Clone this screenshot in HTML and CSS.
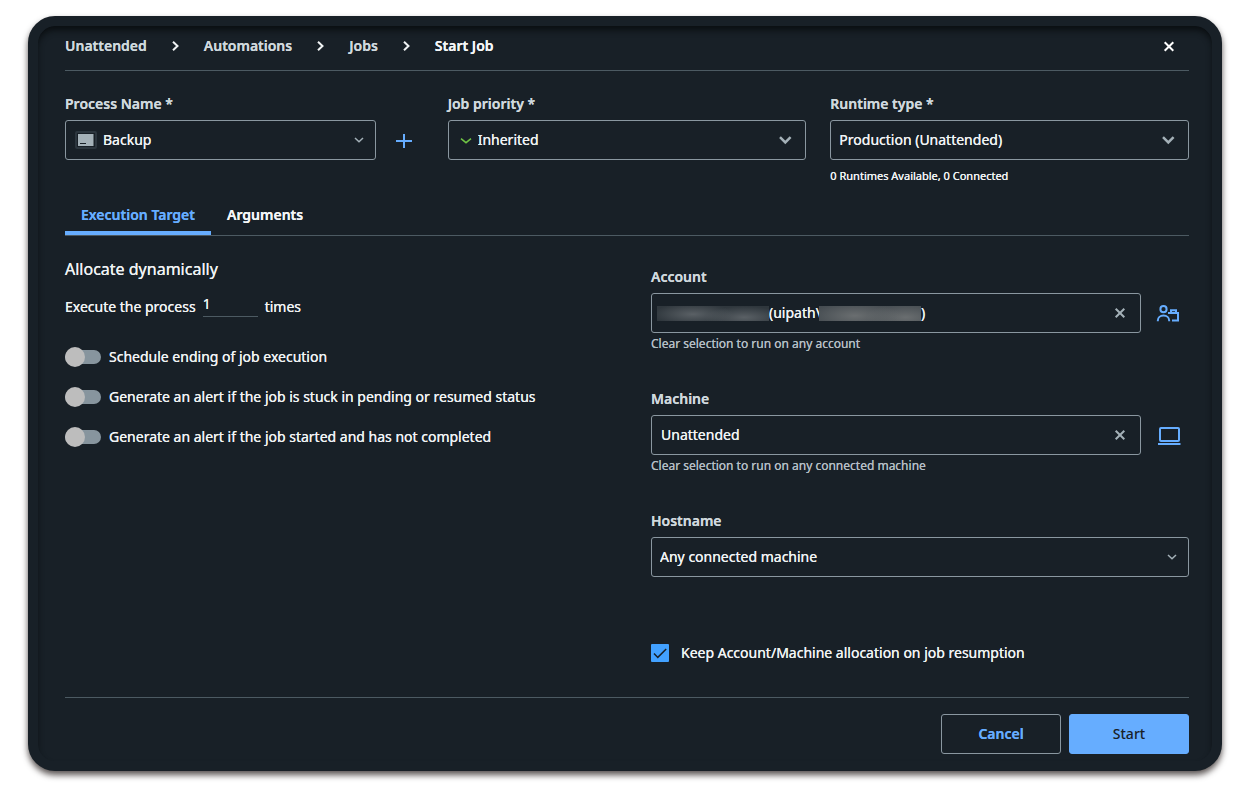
FILE: index.html
```html
<!DOCTYPE html>
<html lang="en">
<head>
<meta charset="utf-8">
<title>Start Job</title>
<link rel="stylesheet" href="styles.css">
</head>
<body>
<main class="dialog">
  <header class="header">
    <nav class="breadcrumbs" aria-label="Breadcrumb">
      <a class="crumb" href="#">Unattended</a>
      <svg class="crumb-sep" viewBox="0 0 11 12" aria-hidden="true"><path d="M3 1.700l4.500 4.300L3 10.300"/></svg>
      <a class="crumb" href="#">Automations</a>
      <svg class="crumb-sep" viewBox="0 0 11 12" aria-hidden="true"><path d="M3 1.700l4.500 4.300L3 10.300"/></svg>
      <a class="crumb" href="#">Jobs</a>
      <svg class="crumb-sep" viewBox="0 0 11 12" aria-hidden="true"><path d="M3 1.700l4.500 4.300L3 10.300"/></svg>
      <a class="crumb crumb-current" href="#" aria-current="page">Start Job</a>
    </nav>
    <button class="icon-button close" type="button" aria-label="Close">
      <svg class="cross" viewBox="0 0 12 12" aria-hidden="true"><path d="M1.700 2.200l8.600 8.600M10.300 2.200l-8.600 8.600"/></svg>
    </button>
  </header>

  <form class="form">
    <div class="top-fields">
      <div class="field">
        <label class="label" for="process">Process Name *</label>
        <div class="with-action">
          <div class="select-box">
            <select class="control pad-package" id="process"><option>Backup</option></select>
            <svg class="lead package" viewBox="0 0 22 18" aria-hidden="true"><rect class="package-frame" x="1" y="1" width="20" height="16" rx="1"/><rect class="package-body" x="3" y="3" width="15.500" height="12"/><path class="package-dash" d="M5 12.500h6"/></svg>
            <svg class="chevron chevron-thin" viewBox="0 0 14 10" aria-hidden="true"><path d="M3 3l4 3.800L11 3"/></svg>
          </div>
          <button class="icon-button add" type="button" aria-label="Add process">
            <svg class="plus" viewBox="0 0 16 16" aria-hidden="true"><path d="M8 2v14M0 9h16"/></svg>
          </button>
        </div>
      </div>
      <div class="field">
        <label class="label" for="priority">Job priority *</label>
        <div class="select-box">
          <select class="control pad-priority" id="priority"><option>Inherited</option></select>
          <svg class="lead priority" viewBox="0 0 12 8" aria-hidden="true"><path d="M1 2.700l5 4L11 2.700"/></svg>
          <svg class="chevron" viewBox="0 0 14 10" aria-hidden="true"><path d="M1 2.200l5.300 5.200L11.600 2.200"/></svg>
        </div>
      </div>
      <div class="field">
        <label class="label" for="runtime">Runtime type *</label>
        <div class="select-box">
          <select class="control" id="runtime"><option>Production (Unattended)</option></select>
          <svg class="chevron" viewBox="0 0 14 10" aria-hidden="true"><path d="M1 2.200l5.300 5.200L11.600 2.200"/></svg>
        </div>
        <p class="runtime-note">0 Runtimes Available, 0 Connected</p>
      </div>
    </div>

    <div class="tabs" role="tablist">
      <button class="tab tab-active" type="button" role="tab" aria-selected="true">Execution Target</button>
      <button class="tab" type="button" role="tab" aria-selected="false">Arguments</button>
    </div>

    <div class="columns">
      <section class="left">
        <h2 class="title">Allocate dynamically</h2>
        <div class="execute">
          <label for="times">Execute the process</label>
          <input class="times" id="times" type="text" inputmode="numeric" value="1">
          <span>times</span>
        </div>
        <div class="switches">
          <label class="switch-row"><input class="switch" type="checkbox" role="switch">Schedule ending of job execution</label>
          <label class="switch-row"><input class="switch" type="checkbox" role="switch">Generate an alert if the job is stuck in pending or resumed status</label>
          <label class="switch-row"><input class="switch" type="checkbox" role="switch">Generate an alert if the job started and has not completed</label>
        </div>
      </section>

      <section class="right">
        <div class="field">
          <label class="label" for="account">Account</label>
          <div class="with-action">
            <div class="input-box account-box">
              <span class="redacted redacted-name"></span>
              <input class="bare account" id="account" type="text" value="(uipath\">
              <span class="redacted redacted-user"></span>
              <span class="paren">)</span>
              <button class="icon-button clear" type="button" aria-label="Clear account">
                <svg class="cross" viewBox="0 0 12 12" aria-hidden="true"><path d="M1.700 1.700l8.600 8.600M10.300 1.700l-8.600 8.600"/></svg>
              </button>
            </div>
            <button class="icon-button side" type="button" aria-label="Manage accounts">
              <svg class="side-icon" viewBox="0 0 24 18" aria-hidden="true"><circle cx="6.500" cy="5.200" r="3.100"/><path d="M.8 17.300v-.6c0-3.100 2.500-5.200 5.700-5.200s5.700 2.100 5.700 5.200v.6M11 9h10v7.500h-6M14 9V6.200h5V9"/></svg>
            </button>
          </div>
          <p class="hint">Clear selection to run on any account</p>
        </div>
        <div class="field">
          <label class="label" for="machine">Machine</label>
          <div class="with-action">
            <div class="input-box">
              <input class="bare machine" id="machine" type="text" value="Unattended">
              <button class="icon-button clear" type="button" aria-label="Clear machine">
                <svg class="cross" viewBox="0 0 12 12" aria-hidden="true"><path d="M1.700 1.700l8.600 8.600M10.300 1.700l-8.600 8.600"/></svg>
              </button>
            </div>
            <button class="icon-button side" type="button" aria-label="Manage machines">
              <svg class="side-icon" viewBox="0 0 24 18" aria-hidden="true"><rect x="3" y="2" width="19" height="13" rx="1"/><path d="M1 18h22.500"/></svg>
            </button>
          </div>
          <p class="hint">Clear selection to run on any connected machine</p>
        </div>
        <div class="field">
          <label class="label" for="hostname">Hostname</label>
          <div class="select-box">
            <select class="control" id="hostname"><option>Any connected machine</option></select>
            <svg class="chevron chevron-thin" viewBox="0 0 14 10" aria-hidden="true"><path d="M3 3l4 3.800L11 3"/></svg>
          </div>
        </div>
        <label class="keep">
          <span class="check-box">
            <input class="check" type="checkbox" checked>
            <svg class="tick" viewBox="0 0 18 18" aria-hidden="true"><path d="M3 9.500l3.800 3.900 8.400-8.400"/></svg>
          </span>
          Keep Account/Machine allocation on job resumption
        </label>
      </section>
    </div>

    <footer class="footer">
      <button class="button cancel" type="button">Cancel</button>
      <button class="button start" type="submit">Start</button>
    </footer>
  </form>
</main>
</body>
</html>
```
FILE: styles.css
```css
* {
  box-sizing: border-box;
}

body {
  margin: 0;
  padding: 16px 16px 16px 28px;
  background: #fff;
  color: #f0f3f4;
  font: 400 14px/20px "Noto Sans", sans-serif;
  text-shadow: 0 0 0 currentColor;
}

button,
input,
select {
  margin: 0;
  color: inherit;
  font: inherit;
  text-shadow: inherit;
}

svg {
  display: block;
  fill: none;
  stroke: currentColor;
}

h2,
p {
  margin: 0;
}

.dialog {
  padding: 0 23px 7px 27px;
  border: 10px solid #182027;
  border-radius: 27px;
  background: #182027;
  box-shadow: 0 4px 6px rgba(20, 12, 10, 0.7), inset 0 5px 6px -1px #0a0e11;
}

.header {
  display: flex;
  align-items: center;
  justify-content: space-between;
  padding: 10px 0 14px;
  border-bottom: 1px solid #4c5a62;
}

.breadcrumbs {
  display: flex;
  align-items: center;
  gap: 23px;
}

.crumb {
  color: #cfd8dd;
  font-weight: 600;
  text-decoration: none;
}

.crumb-current {
  color: #f4f6f7;
}

.crumb-sep {
  width: 11px;
  height: 12px;
  stroke-width: 2;
}

.icon-button {
  display: flex;
  flex: none;
  align-items: center;
  justify-content: center;
  padding: 0;
  border: 0;
  background: none;
}

.close {
  width: 40px;
  height: 20px;
  color: #fff;
}

.cross {
  width: 12px;
  height: 12px;
  stroke-width: 2;
}

.top-fields {
  display: grid;
  grid-template-columns: repeat(3, 1fr);
  gap: 24px;
  padding-top: 23px;
}

.label {
  display: block;
  margin-bottom: 6px;
  color: #cfd8dd;
  font-weight: 600;
}

.with-action {
  display: flex;
  align-items: center;
  gap: 8px;
}

.select-box {
  position: relative;
  flex: 1;
}

.control {
  display: block;
  width: 100%;
  height: 40px;
  padding: 0 36px 0 8px;
  border: 1px solid #8a97a0;
  border-radius: 3px;
  background: #182027;
  appearance: none;
}

.pad-package {
  padding-left: 37px;
}

.pad-priority {
  padding-left: 29px;
}

.lead,
.chevron {
  position: absolute;
  top: 0;
  bottom: 0;
  margin: auto 0;
  pointer-events: none;
}

.package {
  left: 10px;
  width: 22px;
  height: 18px;
}

.package-frame {
  stroke: #2c363e;
  stroke-width: 2;
}

.package-body {
  fill: #a4b1b8;
  stroke: none;
}

.package-dash {
  stroke: #182027;
}

.priority {
  left: 12px;
  width: 12px;
  height: 8px;
  color: #6fc344;
  stroke-width: 1.5;
}

.chevron {
  right: 13px;
  width: 14px;
  height: 10px;
  color: #a4b1b8;
  stroke-width: 2.5;
}

.chevron-thin {
  right: 10px;
  stroke-width: 1.5;
}

.add {
  width: 40px;
  height: 40px;
  color: #66adff;
}

.plus {
  width: 16px;
  height: 16px;
  stroke-width: 2;
}

.runtime-note {
  margin-top: 8px;
  font-size: 11px;
  line-height: 16px;
}

.tabs {
  display: flex;
  margin-top: 21px;
  border-bottom: 1px solid #4c5a62;
}

.tab {
  padding: 0 16px 6px;
  border: 0;
  border-bottom: 4px solid transparent;
  background: none;
  color: #f4f6f7;
  font-weight: 600;
}

.tab-active {
  border-color: #66adff;
  color: #66adff;
}

.columns {
  display: grid;
  grid-template-columns: repeat(2, 1fr);
  gap: 48px;
}

.left {
  padding-top: 21px;
}

.title {
  font-size: 16px;
  font-weight: 400;
  line-height: 24px;
}

.execute {
  display: flex;
  align-items: flex-end;
  gap: 7px;
  margin-top: 12px;
}

.times {
  width: 55px;
  height: 24px;
  padding: 0 0 3px;
  border: 0;
  border-bottom: 1px solid #4c5a62;
  background: none;
}

.switches {
  display: grid;
  gap: 20px;
  margin-top: 30px;
}

.switch-row {
  display: flex;
  align-items: center;
  gap: 8px;
}

.switch {
  display: flex;
  align-items: center;
  width: 36px;
  height: 14px;
  border-radius: 7px;
  background: #87959e;
  appearance: none;
}

.switch::before {
  content: "";
  flex: none;
  width: 20px;
  height: 20px;
  border-radius: 50%;
  background: #bdbdbd;
}

.right {
  display: grid;
  gap: 37px;
  padding-top: 31px;
}

.input-box {
  display: flex;
  flex: 1;
  align-items: center;
  height: 40px;
  padding: 0 4px 0 9px;
  border: 1px solid #8a97a0;
  border-radius: 3px;
}

.account-box {
  padding-left: 5px;
}

.bare {
  min-width: 0;
  padding: 0;
  border: 0;
  background: none;
}

.machine {
  flex: 1;
}

.account {
  width: 50px;
}

.redacted {
  flex: none;
  height: 15px;
}

.redacted-name {
  width: 112px;
  background: radial-gradient(ellipse 40px 11px at 32% 55%, #5a6065, transparent), radial-gradient(ellipse 40px 11px at 78% 75%, #5a6065, transparent), #2f373d;
}

.redacted-user {
  width: 102px;
  background: radial-gradient(ellipse 45px 14px at 35% 65%, #6a6e70, transparent), radial-gradient(ellipse 40px 14px at 85% 75%, #6a6e70, transparent), #444b50;
}

.clear {
  width: 32px;
  height: 32px;
  margin-left: auto;
  color: #a4b1b8;
}

.side {
  width: 40px;
  height: 40px;
  color: #66adff;
}

.side-icon {
  width: 24px;
  height: 18px;
  overflow: visible;
  stroke-width: 2;
}

.hint {
  margin-top: 3px;
  color: #b4bec4;
  font-size: 12px;
  line-height: 16px;
}

.keep {
  display: flex;
  align-items: center;
  gap: 12px;
  margin-top: 29px;
}

.check-box {
  display: grid;
}

.check,
.tick {
  grid-area: 1 / 1;
  width: 18px;
  height: 18px;
}

.check {
  margin: 0;
  border-radius: 1px;
  background: #42a1ff;
  appearance: none;
}

.tick {
  color: #182027;
  pointer-events: none;
  stroke-width: 1.5;
}

.footer {
  display: flex;
  justify-content: flex-end;
  gap: 8px;
  margin-top: 34px;
  padding-top: 16px;
  border-top: 1px solid #4c5a62;
}

.button {
  width: 120px;
  height: 40px;
  border: 1px solid #8a97a0;
  border-radius: 3px;
  background: none;
  font-weight: 600;
}

.cancel {
  color: #66adff;
}

.start {
  border-color: #66adff;
  background: #66adff;
  color: #182027;
  font-weight: 500;
  text-shadow: none;
}
```
